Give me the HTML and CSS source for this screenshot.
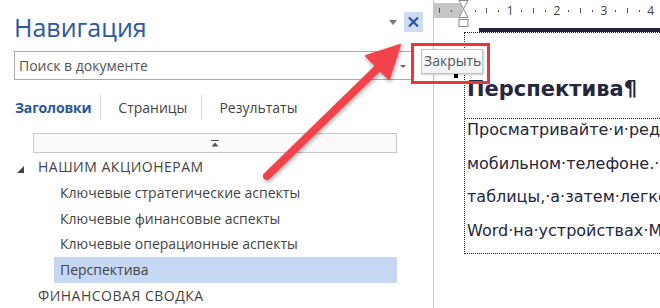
FILE: index.html
```html
<!DOCTYPE html>
<html lang="ru">
<head>
    <meta charset="UTF-8">
    <title>Навигация</title>
    <link rel="stylesheet" href="styles.css">
</head>
<body>

    <div class="app">
        <aside class="nav">
            <div class="nav-head">
                <h1 class="nav-title">Навигация</h1>
                <span class="caret"></span>
                <button class="close-btn" title="Закрыть">
                    <svg width="19" height="20" viewBox="0 0 19 20">
                        <path d="M5 5.5 L14 14.5 M14 5.5 L5 14.5" stroke="#2b579a" stroke-width="2.2" fill="none"/>
                    </svg>
                </button>
            </div>

            <div class="search">
                <span class="search-text">Поиск в документе</span>
                <span class="caret caret-small"></span>
            </div>

            <div class="tabs">
                <span class="tab active">Заголовки</span>
                <span class="tab">Страницы</span>
                <span class="tab">Результаты</span>
            </div>

            <div class="scroll-top">
                <svg width="8" height="7" viewBox="0 0 8 7">
                    <rect x="0" y="0" width="8" height="1" fill="#555"/>
                    <path d="M0.5 6.5 L4 2.5 L7.5 6.5 Z" fill="#555"/>
                </svg>
            </div>

            <ul class="tree">
                <li class="lvl1"><span class="twist"></span>НАШИМ АКЦИОНЕРАМ</li>
                <li class="lvl2">Ключевые стратегические аспекты</li>
                <li class="lvl2">Ключевые финансовые аспекты</li>
                <li class="lvl2">Ключевые операционные аспекты</li>
                <li class="lvl2 selected">Перспектива</li>
                <li class="lvl1">ФИНАНСОВАЯ СВОДКА</li>
            </ul>
        </aside>

        <main class="doc">
            <div class="ruler">
                <div class="ruler-margin"></div>
                <div class="ruler-cells">
                    <span class="tick line"></span>
                    <span class="tick dot"></span>
                    <span class="tick"></span>
                    <span class="tick dot"></span>
                    <span class="tick line"></span>
                    <span class="tick dot"></span>
                    <span class="tick num">1</span>
                    <span class="tick dot"></span>
                    <span class="tick line"></span>
                    <span class="tick dot"></span>
                    <span class="tick num">2</span>
                    <span class="tick dot"></span>
                    <span class="tick line"></span>
                    <span class="tick dot"></span>
                    <span class="tick num">3</span>
                    <span class="tick dot"></span>
                    <span class="tick line"></span>
                    <span class="tick dot"></span>
                    <span class="tick num">4</span>
                    <span class="tick dot"></span>
                </div>
                <svg class="indent-marker" width="11" height="28" viewBox="0 0 11 28">
                    <path d="M1 0.5 H10 L5.5 9 Z" fill="#fff" stroke="#8a8a8a"/>
                    <path d="M5.5 9 L10 17.5 H1 Z" fill="#fff" stroke="#8a8a8a"/>
                    <rect x="1" y="19.5" width="9" height="7" fill="#fff" stroke="#8a8a8a"/>
                </svg>
            </div>

            <div class="page">
                <div class="page-bar"></div>
                <div class="text-area">
                    <h2 class="doc-heading">Перспектива¶</h2>
                    <div class="doc-para">
                        <div class="doc-line">Просматривайте·и·реда</div>
                        <div class="doc-line">мобильном·телефоне.·</div>
                        <div class="doc-line">таблицы,·а·затем·легко</div>
                        <div class="doc-line">Word·на·устройствах·M</div>
                    </div>
                </div>
            </div>
        </main>
    </div>

    <!-- подсказка и стрелка поверх интерфейса -->
    <div class="callout">
        <span class="tooltip">Закрыть</span>
    </div>
    <span class="anchor-mark"></span>

    <svg class="arrow" width="660" height="308" viewBox="0 0 660 308">
        <line x1="267" y1="176" x2="380" y2="66" stroke="#f2434b" stroke-width="8" stroke-linecap="round"/>
        <path d="M400 45 L366 56 L377 67 L389 79 Z" fill="#f2434b" stroke="#f2434b" stroke-width="2" stroke-linejoin="round"/>
    </svg>

</body>
</html>
```

FILE: styles.css
```css
* {
    box-sizing: border-box;
}
body {
    margin: 0;
    width: 660px;
    height: 308px;
    overflow: hidden;
    background: #fff;
    font-family: 'Open Sans', sans-serif;
    position: relative;
}
.app {
    display: flex;
    height: 308px;
}

/* --- панель навигации --- */
.nav {
    width: 434px;
    flex-shrink: 0;
    border-right: 1px solid #c6c6c6;
    padding: 0 10px 0 14px;
    color: #444;
}
.nav-head {
    display: flex;
    align-items: flex-start;
    padding-top: 11px;
}
.nav-title {
    flex: 1;
    margin: 0;
    font-size: 25px;
    font-weight: 400;
    line-height: 33px;
    color: #2e5a9c;
}
.caret {
    width: 0;
    height: 0;
    border-left: 4.5px solid transparent;
    border-right: 4.5px solid transparent;
    border-top: 5px solid #777;
    margin-top: 9px;
    margin-right: 7px;
}
.close-btn {
    width: 19px;
    height: 20px;
    margin-top: 1px;
    padding: 0;
    border: none;
    background: #cddcf1;
    display: block;
}
.close-btn svg {
    display: block;
}
.search {
    width: 399px;
    height: 29px;
    margin-top: 7px;
    border: 1px solid #ababab;
    display: flex;
    align-items: center;
    padding-left: 4px;
}
.search-text {
    flex: 1;
    font-size: 14px;
    color: #555;
}
.caret-small {
    border-left-width: 3px;
    border-right-width: 3px;
    border-top-width: 3px;
    border-top-color: #666;
    margin: 2px 6px 0 0;
}
.tabs {
    display: flex;
    margin-top: 15px;
    height: 25px;
    align-items: center;
    font-size: 14px;
}
.tab {
    line-height: 25px;
    padding: 0 14px 0 17px;
    border-left: 1px solid #dadada;
}
.tab.active {
    padding-left: 1px;
    padding-right: 9px;
    border-left: none;
    font-weight: 700;
    color: #2b579a;
    letter-spacing: -0.2px;
}
.scroll-top {
    margin: 13px 0 0 19px;
    width: 364px;
    height: 20px;
    border: 1px solid #c8c8c8;
    background: #fafafa;
    display: flex;
    justify-content: center;
    padding-top: 6px;
}
.scroll-top svg {
    display: block;
}
.tree {
    list-style: none;
    margin: 1px 0 0;
    padding: 0;
    font-size: 14px;
}
.tree li {
    height: 25.8px;
    line-height: 25.8px;
    white-space: nowrap;
}
.lvl1 {
    padding-left: 24px;
    letter-spacing: 0.5px;
}
.twist {
    display: inline-block;
    width: 0;
    height: 0;
    border-left: 7px solid transparent;
    border-bottom: 7px solid #444;
    margin-left: -21px;
    margin-right: 14px;
    vertical-align: -1px;
}
.lvl2 {
    margin-left: 40px;
    width: 343px;
    padding-left: 6px;
}
.lvl2.selected {
    background: #c5d7f2;
}

/* --- документ --- */
.doc {
    flex: 1;
    overflow: hidden;
    color: #26263d;
}
.ruler {
    position: relative;
    height: 20px;
    padding-top: 3px;
}
.ruler-margin {
    position: absolute;
    left: 0;
    top: 3px;
    width: 28px;
    height: 15px;
    background: #c6c6c6;
}
.ruler-cells {
    position: relative;
    display: flex;
    height: 15px;
    align-items: center;
}
.tick {
    flex: 0 0 11.72px;
    display: flex;
    justify-content: center;
    font-size: 12px;
    line-height: 15px;
    color: #444;
}
.tick.dot::before {
    content: "";
    width: 1px;
    height: 2px;
    background: #555;
}
.tick.line::before {
    content: "";
    width: 1px;
    height: 5px;
    background: #555;
}
.indent-marker {
    position: absolute;
    left: 24px;
    top: 0;
}
.page {
    padding-left: 30px;
}
.page-bar {
    margin: 8px 0 0 15px;
    height: 4px;
    background: #24233f;
}
.text-area {
    border-top: 1px dotted #222;
    border-left: 1px dotted #222;
    font-family: 'DejaVu Sans', sans-serif;
    white-space: nowrap;
}
.doc-heading {
    margin: 0;
    padding: 42px 0 15px 2px;
    font-size: 21px;
    line-height: 28px;
    font-weight: 700;
    border-bottom: 1px dotted #222;
}
.doc-para {
    border-bottom: 1px dotted #222;
}
.doc-line {
    height: 33.5px;
    line-height: 22px;
    font-size: 16px;
    padding-left: 2px;
}

/* --- подсказка, стрелка --- */
.callout {
    position: absolute;
    left: 411px;
    top: 43px;
    width: 79px;
    height: 41px;
    border: 3px solid #e8363d;
    padding: 3px 0 0 7px;
}
.tooltip {
    display: block;
    width: 62px;
    height: 25px;
    border: 1px solid #c4c4c4;
    background: linear-gradient(#ffffff, #eef1f6);
    box-shadow: 1px 1px 2px rgba(0, 0, 0, 0.2);
    font-size: 14px;
    line-height: 22px;
    padding-left: 2px;
    color: #555;
}
.anchor-mark {
    position: absolute;
    left: 454px;
    top: 74px;
    width: 4px;
    height: 4px;
    background: #000;
}
.arrow {
    position: absolute;
    left: 0;
    top: 0;
    pointer-events: none;
    filter: drop-shadow(1px 2px 2px rgba(0, 0, 0, 0.35));
}
```
